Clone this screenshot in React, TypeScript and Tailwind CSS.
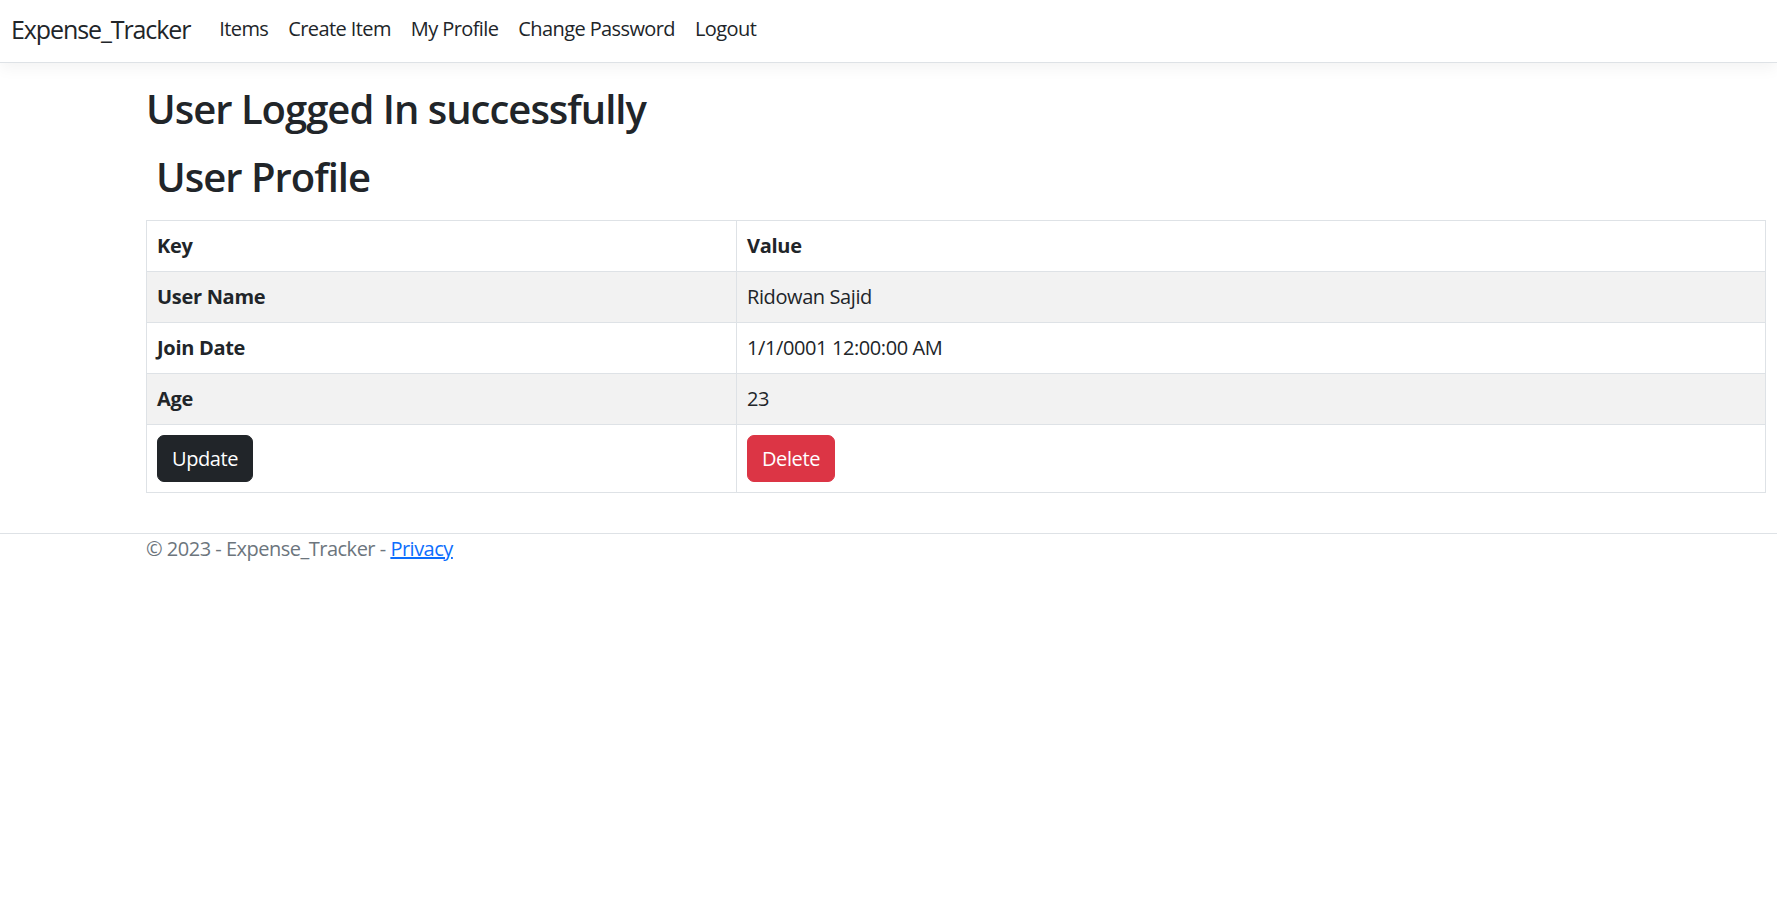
import React from "react";

export default function App() {
  const rows: { k: string; v: string; striped: boolean }[] = [
    { k: "User Name", v: "Ridowan Sajid", striped: true },
    { k: "Join Date", v: "1/1/0001 12:00:00 AM", striped: false },
    { k: "Age", v: "23", striped: true },
  ];
  return (
    <div className="min-h-[906px] bg-white text-[#212529] text-[20px] leading-[30px]" style={{ fontFamily: '"Open Sans", "Noto Sans", "Liberation Sans", sans-serif' }}>
      <nav className="h-[63px] border-b border-[#dee2e6] shadow-[0_5px_15px_rgba(0,0,0,0.05)] flex items-center pl-[11px] pb-[4px]">
        <span className="text-[25px] leading-[37px] text-[#212529] tracking-[-1.1px] mr-[19px]">Expense_Tracker</span>
        <ul className="flex items-center">
          {["Items", "Create Item", "My Profile", "Change Password", "Logout"].map((t) => (
            <li key={t} className="px-[10px] text-[20px] leading-[30px] text-[#212529] tracking-[-0.6px]">{t}</li>
          ))}
        </ul>
      </nav>
      <main className="pl-[146px] pr-[11px] pt-[21px] pb-[20px]">
        <h2 className="text-[40px] leading-[48px] font-semibold pt-[1px] mb-[9px] tracking-[-1px]">User Logged In successfully</h2>
        <div className="p-[10px]">
          <h2 className="text-[40px] leading-[48px] font-semibold pt-[1px] mb-[9px] tracking-[-1px]">User Profile</h2>
        </div>
        <table className="w-full border-collapse border border-[#dee2e6] mb-[20px]">
          <thead>
            <tr className="border-b border-[#dee2e6]">
              <th className="w-[590px] text-left font-bold px-[10px] py-[10px] border-r border-[#dee2e6] tracking-[-0.3px]">Key</th>
              <th className="text-left font-bold px-[10px] py-[10px] tracking-[-0.3px]">Value</th>
            </tr>
          </thead>
          <tbody>
            {rows.map((r) => (
              <tr key={r.k} className={`border-b border-[#dee2e6] ${r.striped ? "bg-[#f2f2f2]" : "bg-white"}`}>
                <th className="text-left font-bold px-[10px] py-[10px] border-r border-[#dee2e6] tracking-[-0.3px]">{r.k}</th>
                <td className="px-[10px] py-[10px] tracking-[-0.4px]">{r.v}</td>
              </tr>
            ))}
            <tr>
              <td className="px-[10px] py-[10px] border-r border-[#dee2e6]">
                <button className="bg-[#212529] border border-[#212529] text-white rounded-[7px] px-[14px] py-[7.5px] leading-[30px] tracking-[-0.4px]">Update</button>
              </td>
              <td className="px-[10px] py-[10px]">
                <button className="bg-[#dc3545] border border-[#dc3545] text-white rounded-[7px] px-[14px] py-[7.5px] leading-[30px] tracking-[-0.4px]">Delete</button>
              </td>
            </tr>
          </tbody>
        </table>
      </main>
      <footer className="border-t border-[#dee2e6] pl-[146px] text-[#6c757d] leading-[30px] tracking-[-0.5px]">
        © 2023 - Expense_Tracker - <a className="text-[#0d6efd] underline" href="#">Privacy</a>
      </footer>
    </div>
  );
}
